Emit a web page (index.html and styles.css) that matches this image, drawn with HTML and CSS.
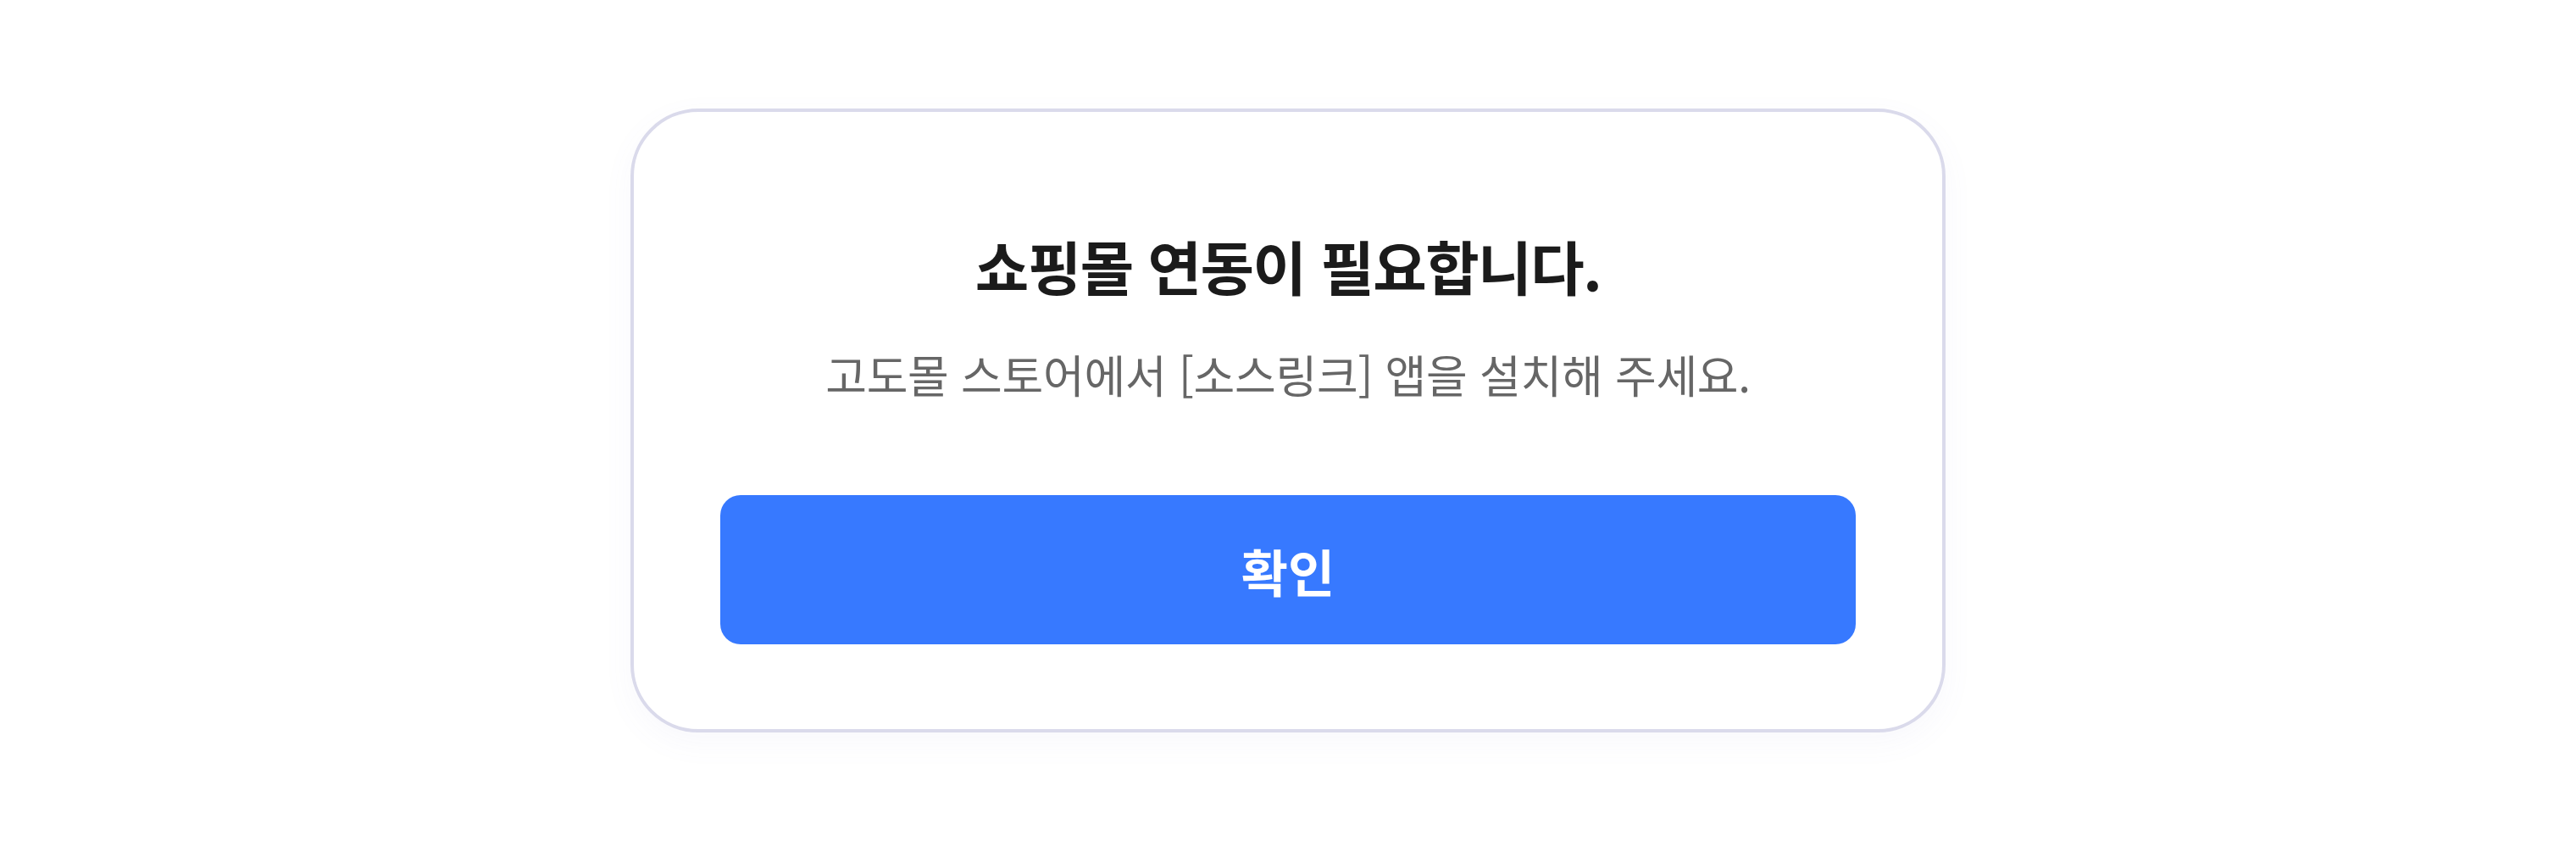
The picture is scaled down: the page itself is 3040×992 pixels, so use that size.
FILE: index.html
```html
<!DOCTYPE html>
<html lang="ko">
<head>
<meta charset="utf-8">
<link rel="stylesheet" href="styles.css">
</head>
<body>
<div class="page">
  <div class="card">
    <h1 class="title">쇼핑몰 연동이 필요합니다.</h1>
    <p class="desc">고도몰 스토어에서 [소스링크] 앱을 설치해 주세요.</p>
    <button class="confirm" type="button">확인</button>
  </div>
</div>
</body>
</html>
```
FILE: styles.css
```css
html, body {
  margin: 0;
  padding: 0;
  background: #ffffff;
}
.page {
  width: 3040px;
  height: 992px;
  display: flex;
  align-items: center;
  justify-content: center;
  font-family: "Noto Sans CJK KR", "Noto Sans", sans-serif;
}
.card {
  box-sizing: border-box;
  width: 1552px;
  height: 736px;
  border: 4px solid #dadaeb;
  border-radius: 80px;
  background: #ffffff;
  box-shadow: 0 12px 36px rgba(120, 120, 200, 0.05);
  padding: 137px 102px 100px;
  display: flex;
  flex-direction: column;
  align-items: center;
}
.title {
  margin: 0;
  font-size: 69px;
  line-height: 88px;
  font-weight: 700;
  color: #1b1b1b;
  letter-spacing: -1.5px;
}
.desc {
  margin: 48px 0 0;
  font-size: 53px;
  line-height: 72px;
  font-weight: 400;
  color: #666666;
  letter-spacing: -0.3px;
}
.confirm {
  margin-top: auto;
  width: 1340px;
  height: 176px;
  border: none;
  border-radius: 24px;
  background: #3779ff;
  color: #ffffff;
  font-family: inherit;
  font-size: 60px;
  font-weight: 700;
  padding: 0;
}
```
